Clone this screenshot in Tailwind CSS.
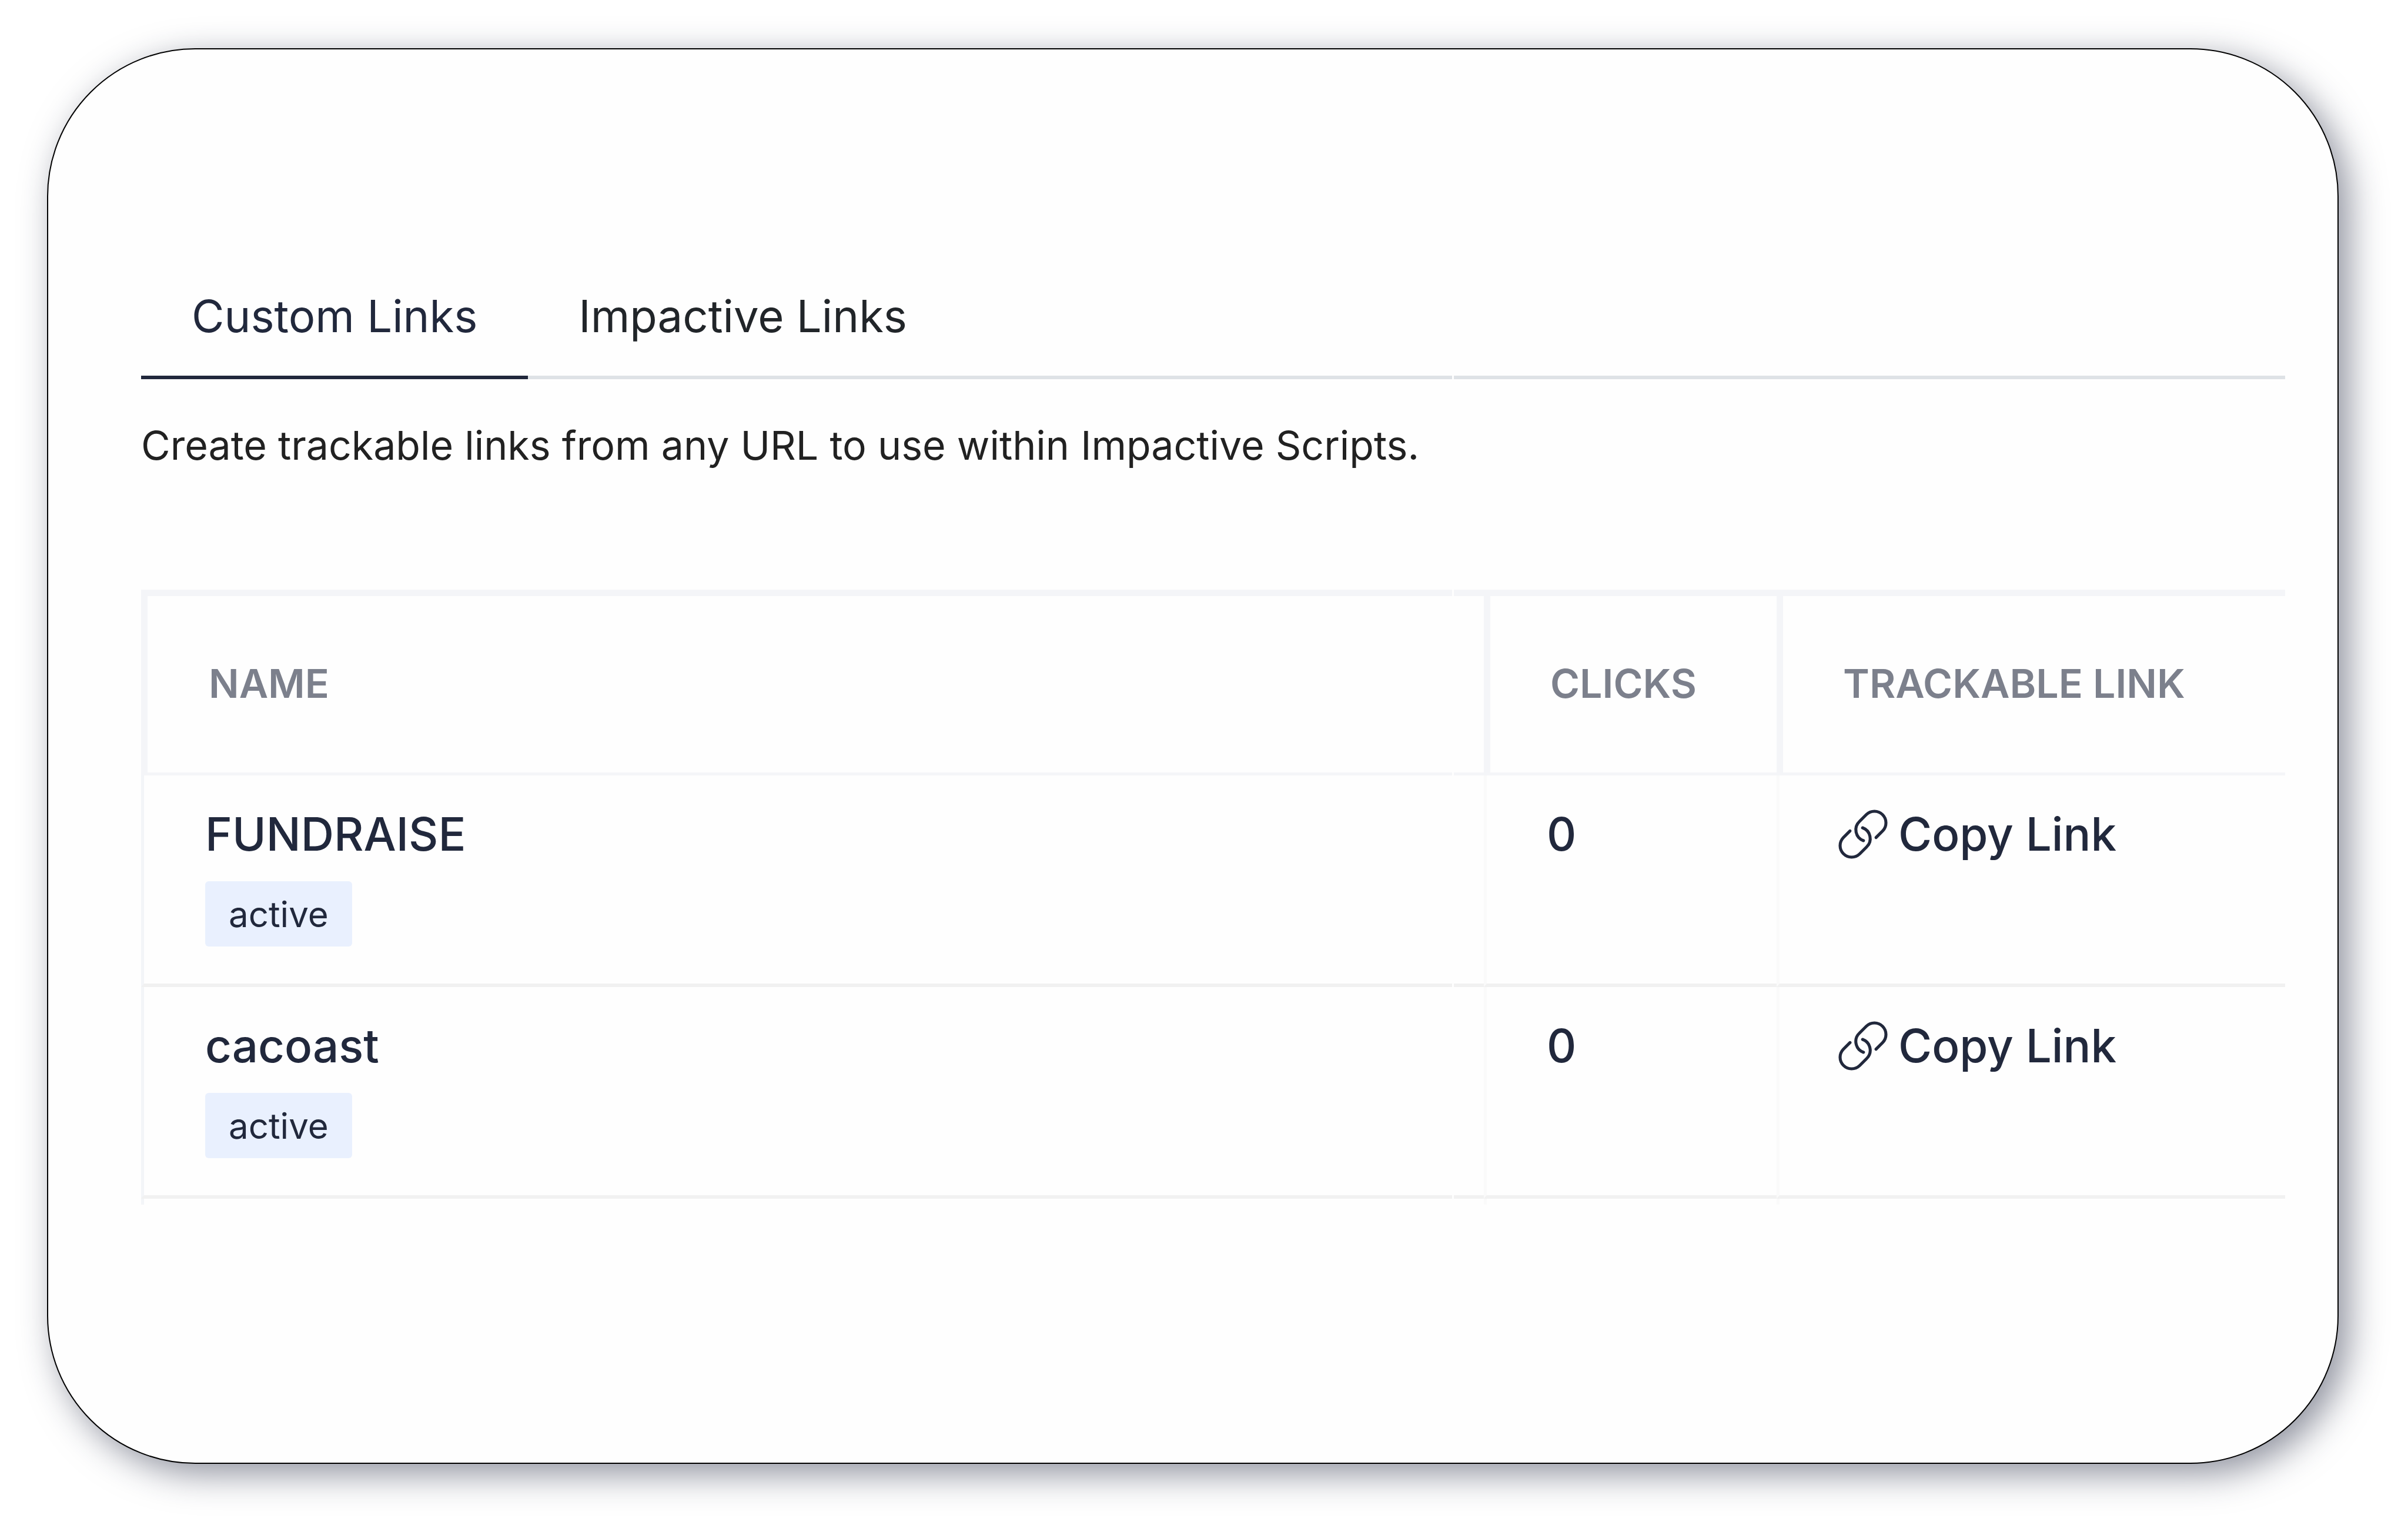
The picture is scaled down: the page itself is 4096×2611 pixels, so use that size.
<!DOCTYPE html>
<html lang="en">
<head>
    <meta charset="UTF-8">
    <meta name="viewport" content="width=device-width, initial-scale=1.0">
    <title>Custom Links</title>
    <script src="https://cdn.jsdelivr.net/npm/@tailwindcss/browser@4"></script>
    <style>
        body {
            font-family: 'Inter', sans-serif;
        }
    </style>
</head>
<body class="bg-white text-[#21283c] flex min-h-screen pt-[82px] pr-[118px] pb-[121px] pl-[80px]">

    <main class="relative flex-1 bg-[#fefefe] border-2 border-black rounded-[252px] pt-[351px] pr-[89px] pl-[158px] shadow-[17px_17px_60px_rgba(34,40,64,0.5)]">
        <!-- Tabs -->
        <nav class="flex border-b-[6px] border-[#dee2e6] text-[76px] leading-[120px]">
            <button type="button" class="-mb-[6px] border-b-[6px] border-[#21283c] px-[86px] py-[42px]">Custom Links</button>
            <button type="button" class="-mb-[6px] border-b-[6px] border-transparent px-[86px] py-[42px] text-[#212529]">Impactive Links</button>
        </nav>

        <p class="mt-[62px] text-[68px] leading-[100px] text-[#212121]">Create trackable links from any URL to use within Impactive Scripts.</p>

        <!-- Links table -->
        <div class="relative mt-[196px]">
            <table class="w-full table-fixed border-separate border-spacing-0 text-left">
                <thead class="text-[68px] leading-[100px] text-[#7c808c]">
                    <tr class="h-[316px]">
                        <th class="border-t-[11px] border-l-[11px] border-b-[5px] border-[#f4f5f8] pl-[104px] pb-[4px] font-semibold">NAME</th>
                        <th class="w-[498px] border-t-[11px] border-l-[11px] border-b-[5px] border-[#f4f5f8] pl-[102px] pb-[4px] font-semibold">CLICKS</th>
                        <th class="w-[865px] border-t-[11px] border-l-[11px] border-b-[5px] border-[#f4f5f8] pl-[102px] pb-[4px] font-semibold">TRACKABLE LINK</th>
                    </tr>
                </thead>
                <tbody class="text-[78px] leading-[120px] font-medium">
                    <tr class="h-[360px] align-top">
                        <td class="border-l-[5px] border-b-[6px] border-l-[#f3f5f8] border-b-[#f1f1f1] pl-[104px] pt-[40px]">
                            <div>FUNDRAISE</div>
                            <span class="mt-[20px] block w-fit rounded-[6px] bg-[#e9f0fe] px-[40px] pt-[6px] pb-[5px] text-[60px] leading-[100px] font-normal">active</span>
                        </td>
                        <td class="border-l-[5px] border-b-[6px] border-l-[#fafafa] border-b-[#f1f1f1] pl-[102px] pt-[40px]">0</td>
                        <td class="border-l-[5px] border-b-[6px] border-l-[#fafafa] border-b-[#f1f1f1] pl-[100px] pt-[40px]">
                            <button type="button" class="flex items-center gap-[18px]">
                                <svg class="size-[84px]" viewBox="1.3 1.3 21.4 21.4" fill="none" stroke="currentColor" stroke-width="1.3" stroke-linecap="round" stroke-linejoin="round" aria-hidden="true">
                                    <path d="M12.2 14.8A5 5 0 0 1 10.46 6.46l3-3a5 5 0 0 1 7.07 7.07l-2.9 2.9"/>
                                    <path d="M11.8 9.2A5 5 0 0 1 13.54 17.54l-3 3a5 5 0 0 1-7.07-7.07l2.9-2.9"/>
                                </svg>
                                Copy Link
                            </button>
                        </td>
                    </tr>
                    <tr class="h-[360px] align-top">
                        <td class="border-l-[5px] border-b-[6px] border-l-[#f3f5f8] border-b-[#f1f1f1] pl-[104px] pt-[40px]">
                            <div>cacoast</div>
                            <span class="mt-[20px] block w-fit rounded-[6px] bg-[#e9f0fe] px-[40px] pt-[6px] pb-[5px] text-[60px] leading-[100px] font-normal">active</span>
                        </td>
                        <td class="border-l-[5px] border-b-[6px] border-l-[#fafafa] border-b-[#f1f1f1] pl-[102px] pt-[40px]">0</td>
                        <td class="border-l-[5px] border-b-[6px] border-l-[#fafafa] border-b-[#f1f1f1] pl-[100px] pt-[40px]">
                            <button type="button" class="flex items-center gap-[18px]">
                                <svg class="size-[84px]" viewBox="1.3 1.3 21.4 21.4" fill="none" stroke="currentColor" stroke-width="1.3" stroke-linecap="round" stroke-linejoin="round" aria-hidden="true">
                                    <path d="M12.2 14.8A5 5 0 0 1 10.46 6.46l3-3a5 5 0 0 1 7.07 7.07l-2.9 2.9"/>
                                    <path d="M11.8 9.2A5 5 0 0 1 13.54 17.54l-3 3a5 5 0 0 1-7.07-7.07l2.9-2.9"/>
                                </svg>
                                Copy Link
                            </button>
                        </td>
                    </tr>
                    <!-- Start of the next, cut-off row -->
                    <tr class="h-[10px]" aria-hidden="true">
                        <td class="border-l-[5px] border-[#f3f5f8]"></td>
                        <td class="border-l-[5px] border-[#fafafa]"></td>
                        <td class="border-l-[5px] border-[#fafafa]"></td>
                    </tr>
                </tbody>
            </table>
        </div>

        <!-- Seam that breaks the horizontal rules -->
        <div class="absolute top-[500px] bottom-[400px] right-[1503px] w-[3px] bg-[#fefefe]"></div>
    </main>

</body>
</html>
